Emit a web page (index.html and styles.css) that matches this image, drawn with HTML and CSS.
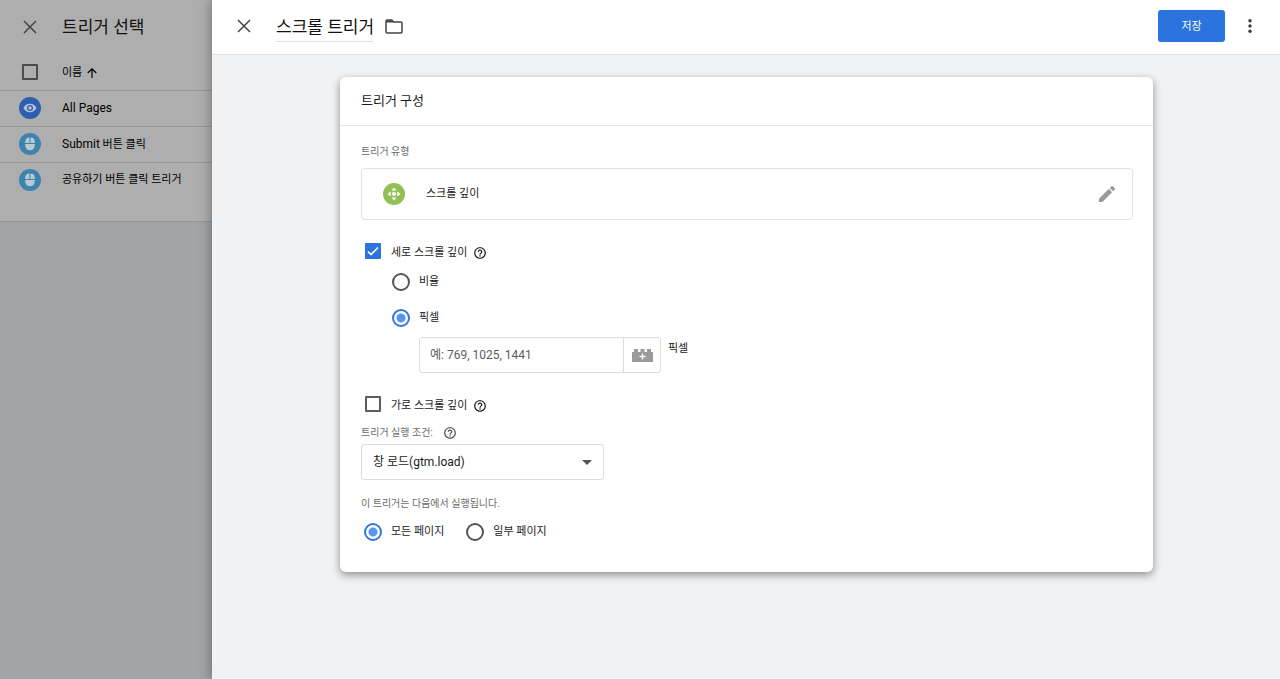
FILE: index.html
```html
<!DOCTYPE html>
<html lang="ko">
<head>
<meta charset="utf-8">
<title>스크롤 트리거</title>
<link rel="stylesheet" href="styles.css">
</head>
<body>
<svg class="defs" aria-hidden="true">
  <symbol id="close" viewBox="0 0 14 14"><path d="M1 1l12 12M13 1L1 13" fill="none" stroke="currentColor" stroke-width="1.500"/></symbol>
  <symbol id="help" viewBox="0 0 24 24"><path fill="currentColor" d="M11 18h2v-2h-2v2zm1-16C6.480 2 2 6.480 2 12s4.480 10 10 10 10-4.480 10-10S17.520 2 12 2zm0 18c-4.410 0-8-3.590-8-8s3.590-8 8-8 8 3.590 8 8-3.590 8-8 8zm0-14c-2.210 0-4 1.790-4 4h2c0-1.100.9-2 2-2s2 .9 2 2c0 2-3 1.750-3 5h2c0-2.250 3-2.500 3-5 0-2.210-1.790-4-4-4z"/></symbol>
  <symbol id="mouse" viewBox="0 0 22 22"><circle cx="11" cy="11" r="11" fill="#3c83ae"/><path fill="#b9c9d2" d="M10.500 4.500v5.500H6.200V9a4.500 4.500 0 0 1 4.300-4.500zM11.500 4.500A4.500 4.500 0 0 1 15.800 9v1h-4.300zM6.200 11h9.600v1.500a4.800 4.800 0 0 1-9.600 0z"/></symbol>
</svg>
<div class="app">
  <aside class="side">
    <div class="side-panel">
      <div class="side-head">
        <button class="icon-btn" aria-label="닫기"><svg class="i14"><use href="#close"/></svg></button>
        <h2 class="title">트리거 선택</h2>
      </div>
      <table class="list">
        <thead>
          <tr>
            <th class="cell-icon"><input class="check check-dim" type="checkbox" aria-label="모두 선택"></th>
            <th><button class="sort">이름
              <svg class="sort-icon" viewBox="0 0 10 10"><path d="M5 10V1M.7 5L5 .8 9.300 5" fill="none" stroke="currentColor" stroke-width="1.200"/></svg></button></th>
          </tr>
        </thead>
        <tbody>
          <tr>
            <td class="cell-icon"><svg class="i22" viewBox="0 0 22 22"><circle cx="11" cy="11" r="11" fill="#2f5fb0"/><path d="M4.500 11c1.300-2.700 3.600-4.200 6.500-4.200s5.200 1.500 6.500 4.200c-1.300 2.700-3.600 4.200-6.500 4.200S5.800 13.700 4.500 11z" fill="#b6c2d6"/><circle cx="11" cy="11" r="3" fill="#2f5fb0"/><circle cx="11" cy="11" r="1.700" fill="#b6c2d6"/></svg></td>
            <td><span class="latin">All Pages</span></td>
          </tr>
          <tr>
            <td class="cell-icon"><svg class="i22"><use href="#mouse"/></svg></td>
            <td><span class="latin">Submit</span> 버튼 클릭</td>
          </tr>
          <tr>
            <td class="cell-icon"><svg class="i22"><use href="#mouse"/></svg></td>
            <td>공유하기 버튼 클릭 트리거</td>
          </tr>
        </tbody>
      </table>
    </div>
  </aside>

  <main class="main">
    <header class="bar">
      <button class="icon-btn" aria-label="닫기"><svg class="i14"><use href="#close"/></svg></button>
      <input class="title name" type="text" aria-label="트리거 이름" value="스크롤 트리거">
      <button class="icon-btn" aria-label="폴더"><svg class="folder" viewBox="0 0 18 15"><path d="M1 2.200Q1 1 2.200 1h4.600l1.800 2h7.200Q17 3 17 4.200v8.600q0 1.200-1.200 1.200H2.200Q1 14 1 12.800z" fill="none" stroke="currentColor" stroke-width="1.500"/><path d="M1 1.200h5.800l1.800 2.300H1z" fill="currentColor"/></svg></button>
      <button class="save">저장</button>
      <button class="icon-btn" aria-label="더보기"><svg class="more" viewBox="0 0 4 16"><circle cx="2" cy="2.800" r="1.700"/><circle cx="2" cy="8" r="1.700"/><circle cx="2" cy="13.200" r="1.700"/></svg></button>
    </header>

    <div class="content">
      <section class="card">
        <h3 class="card-title">트리거 구성</h3>
        <form class="card-body">
          <div class="caption">트리거 유형</div>
          <button class="type" type="button">
            <svg class="i22" viewBox="0 0 22 22"><circle cx="11" cy="11" r="11" fill="#92bf56"/><g fill="#fff"><circle cx="11" cy="11" r="2"/><path d="M11 4.600l2.300 2.600-1 .6L11 7.200l-1.300.6-1-.6zM11 17.400l2.300-2.600-1-.6-1.300.6-1.300-.6-1 .6zM4.600 11l2.900-2.300.6 1L7.400 11l.7 1.300-.6 1zM17.400 11l-2.900-2.300-.6 1 .7 1.300-.7 1.300.6 1z"/></g></svg>
            <span class="type-name">스크롤 깊이</span>
            <svg class="pencil" viewBox="3 3 18 18"><path fill="#9a9a9a" d="M3 17.250V21h3.750L17.810 9.940l-3.750-3.750L3 17.250zM20.710 7.040a1 1 0 0 0 0-1.410l-2.340-2.340a1 1 0 0 0-1.410 0l-1.830 1.830 3.750 3.750 1.830-1.830z"/></svg>
          </button>

          <div class="check-row">
            <input class="check" id="vertical" type="checkbox" checked>
            <label class="check-label" for="vertical">세로 스크롤 깊이</label>
            <svg class="i14 help"><use href="#help"/></svg>
          </div>
          <div class="nested">
            <label class="option tall"><input class="radio" type="radio" name="unit">비율</label>
            <label class="option tall"><input class="radio" type="radio" name="unit" checked>픽셀</label>
            <div class="pixels">
              <div class="field">
                <input class="field-input" id="px" type="text" placeholder="예: 769, 1025, 1441">
                <button class="field-btn" type="button" aria-label="변수 선택"><svg class="brick" viewBox="0 0 21 13"><path fill="#9a9a9a" d="M0 3h2V0h4v3h2.500V0h4v3H15V0h4v3h2v10H0z"/><path d="M10.500 4.500v6M7.500 7.500h6" stroke="#fff" stroke-width="1.300"/></svg></button>
              </div>
              <label for="px">픽셀</label>
            </div>
          </div>

          <div class="check-row">
            <input class="check" id="horizontal" type="checkbox">
            <label class="check-label" for="horizontal">가로 스크롤 깊이</label>
            <svg class="i14 help"><use href="#help"/></svg>
          </div>
          <div class="fire">
            <label class="caption" for="when">트리거 실행 조건:</label>
            <svg class="i14 soft"><use href="#help"/></svg>
          </div>
          <div class="select-wrap">
            <select class="select" id="when"><option>창 로드(gtm.load)</option></select>
          </div>

          <fieldset class="pages">
            <legend class="caption">이 트리거는 다음에서 실행됩니다.</legend>
            <div class="pages-row">
              <label class="option"><input class="radio" type="radio" name="pages" checked>모든 페이지</label>
              <label class="option"><input class="radio" type="radio" name="pages">일부 페이지</label>
            </div>
          </fieldset>
        </form>
      </section>
    </div>
  </main>
</div>
</body>
</html>
```

FILE: styles.css
```css
* { box-sizing: border-box; }

body {
  margin: 0;
  font: 11px/16px Roboto, "Noto Sans CJK KR", sans-serif;
  color: #1b1b1b;
}

button, input, select {
  margin: 0;
  padding: 0;
  border: 0;
  background: none;
  font: inherit;
  color: inherit;
}

svg { display: block; flex: none; }
.defs { position: absolute; width: 0; height: 0; }
.i14 { width: 14px; height: 14px; }
.i22 { width: 22px; height: 22px; }
.soft { color: #444; }
.latin { font-size: 12px; }

.app { display: flex; min-height: 100vh; }

/* Dimmed trigger list behind the editor */
.side { flex: 0 0 212px; background: #a2a4a6; }
.side-panel {
  padding-bottom: 23px;
  background: #aeaeae;
  border-bottom: 1px solid #979797;
}
.side-head {
  display: flex;
  align-items: center;
  gap: 25px;
  height: 54px;
  padding-left: 23px;
}
.title { margin: 0; font-size: 17px; line-height: 24px; font-weight: 400; color: #111; }
.icon-btn { display: flex; color: #444; }

.list { width: 100%; border-collapse: collapse; color: #000; }
.list th, .list td {
  height: 36px;
  padding: 0;
  text-align: left;
  vertical-align: middle;
  font-weight: 400;
}
.list tbody tr { border-top: 1px solid #979797; }
.list .cell-icon { width: 62px; padding-left: 19px; }
.sort { display: flex; align-items: center; gap: 5px; padding-top: 2px; }
.sort-icon { width: 10px; height: 10px; }

/* Editor */
.main {
  position: relative;
  flex: 1;
  background: #f0f2f4;
  box-shadow: 0 0 12px rgba(0, 0, 0, .4);
}
.bar {
  display: flex;
  align-items: center;
  height: 55px;
  padding: 0 28px 2px 25px;
  background: #fff;
  border-bottom: 1px solid #dcdfe1;
}
.name {
  width: 97px;
  height: 32px;
  margin: 0 12px 0 25px;
  border-bottom: 1px solid #dedede;
}
.folder { width: 18px; height: 15px; }
.save {
  width: 67px;
  height: 32px;
  margin: 0 23px 0 auto;
  padding-top: 2px;
  border-radius: 3px;
  background: #2b74df;
  color: #fff;
}
.more { width: 4px; height: 16px; fill: #3c3c3c; }

.content { padding: 22px 127px 40px 128px; }
.card {
  background: #fff;
  border-radius: 6px;
  box-shadow: 0 3px 9px rgba(0, 0, 0, .42);
}
.card-title {
  margin: 0;
  padding: 12px 21px;
  border-bottom: 1px solid #e4e6e7;
  font-size: 13px;
  line-height: 24px;
  font-weight: 400;
}
.card-body { padding: 18px 20px 28px 21px; }
.caption { font-size: 10px; color: #6a6a6a; }

.type {
  display: flex;
  align-items: center;
  gap: 21px;
  width: 100%;
  height: 52px;
  margin: 8px 0 19px;
  padding: 0 17px 0 21px;
  border: 1px solid #dfe2e4;
  border-radius: 4px;
}
.type-name { flex: 1; text-align: left; }
.pencil { width: 16px; height: 16px; }

.check-row { display: flex; align-items: center; height: 24px; padding-left: 4px; }
.check-label { padding: 3px 6px 0 10px; }
.help { margin-top: 3px; color: #111; }
.option { display: flex; align-items: center; gap: 9px; height: 24px; }
.option.tall { height: 36px; }
.check {
  appearance: none;
  width: 16px;
  height: 16px;
  border: 2px solid #5c5c5c;
  border-radius: 1px;
}
.check:checked {
  border-color: #2b74df;
  background: #2b74df url("data:image/svg+xml,%3Csvg xmlns='http://www.w3.org/2000/svg' viewBox='0 0 12 12'%3E%3Cpath d='M1 6.500l3 3L11 2.500' fill='none' stroke='white' stroke-width='1.700'/%3E%3C/svg%3E") center / 12px 12px no-repeat;
}
.check-dim { display: block; margin-left: 3px; border-color: #4c4c4c; }
.radio {
  appearance: none;
  width: 18px;
  height: 18px;
  border: 2px solid #555;
  border-radius: 50%;
}
.radio:checked {
  border-color: #2f78de;
  background: radial-gradient(circle, #5b94ea 4px, transparent 5px);
}

.nested { padding: 1px 0 19px 31px; }
.pixels { display: flex; gap: 7px; padding: 1px 0 0 27px; line-height: 24px; }
.field {
  display: flex;
  width: 242px;
  height: 36px;
  border: 1px solid #dadcde;
  border-radius: 3px;
}
.field-input { flex: 1; min-width: 0; padding-left: 10px; font-size: 12px; }
.field-input::placeholder { color: #5c5c5c; opacity: 1; }
.field-btn {
  display: flex;
  align-items: center;
  justify-content: center;
  width: 37px;
  border-left: 1px solid #dadcde;
}
.brick { width: 21px; height: 13px; }

.fire { display: flex; align-items: center; gap: 10px; height: 28px; padding-top: 6px; }
.select-wrap { position: relative; width: 243px; }
.select-wrap::after {
  content: "";
  position: absolute;
  right: 12px;
  top: 16px;
  border: 5px solid transparent;
  border-top-color: #555;
  border-bottom: 0;
  pointer-events: none;
}
.select {
  appearance: none;
  width: 100%;
  height: 36px;
  padding-left: 11px;
  border: 1px solid #dadcde;
  border-radius: 3px;
  font-size: 12px;
}
.pages { margin: 16px 0 0; padding: 0; border: 0; }
.pages legend { padding: 0; }
.pages-row { display: flex; gap: 22px; padding: 8px 0 0 3px; }
```
